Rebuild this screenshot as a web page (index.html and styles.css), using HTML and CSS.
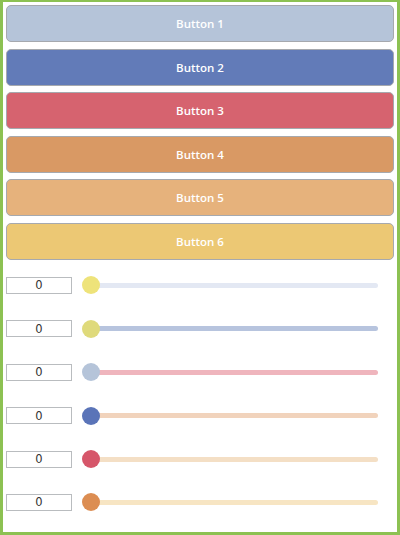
FILE: index.html
```html
<!DOCTYPE html>
<html>
<head>
<meta charset="utf-8">
<link rel="stylesheet" href="styles.css">
</head>
<body>
<div class="frame">
  <div class="buttons">
    <div class="btn b1">Button 1</div>
    <div class="btn b2">Button 2</div>
    <div class="btn b3">Button 3</div>
    <div class="btn b4">Button 4</div>
    <div class="btn b5">Button 5</div>
    <div class="btn b6">Button 6</div>
  </div>
  <div class="rows">
    <div class="row s1"><div class="num">0</div><div class="slider"><div class="thumb"></div><div class="track"></div></div></div>
    <div class="row s2"><div class="num">0</div><div class="slider"><div class="thumb"></div><div class="track"></div></div></div>
    <div class="row s3"><div class="num">0</div><div class="slider"><div class="thumb"></div><div class="track"></div></div></div>
    <div class="row s4"><div class="num">0</div><div class="slider"><div class="thumb"></div><div class="track"></div></div></div>
    <div class="row s5"><div class="num">0</div><div class="slider"><div class="thumb"></div><div class="track"></div></div></div>
    <div class="row s6"><div class="num">0</div><div class="slider"><div class="thumb"></div><div class="track"></div></div></div>
  </div>
</div>
</body>
</html>
```
FILE: styles.css
```css
html, body {
  margin: 0;
  padding: 0;
  background: #ffffff;
}
.frame {
  box-sizing: border-box;
  width: 400px;
  height: 535px;
  border: 3px solid #8cc152;
  border-top-width: 2px;
  padding: 3px 3px 0 3px;
  font-family: "Open Sans", "DejaVu Sans", sans-serif;
}
.buttons {
  display: flex;
  flex-direction: column;
  gap: 6.6px;
}
.btn {
  box-sizing: border-box;
  height: 37px;
  border: 1px solid #a6a9ae;
  border-radius: 5px;
  color: #ffffff;
  font-size: 11.5px;
  font-weight: 600;
  display: flex;
  align-items: center;
  justify-content: center;
}
.b1 { background: #b5c4d9; }
.b2 { background: #627bb8; }
.b3 { background: #d6636f; }
.b4 { background: #d99964; }
.b5 { background: #e6b27c; }
.b6 { background: #ecc874; }
.rows {
  display: flex;
  flex-direction: column;
  gap: 26.4px;
  margin-top: 17px;
}
.row {
  display: flex;
  align-items: center;
  height: 17px;
}
.num {
  box-sizing: border-box;
  width: 66px;
  height: 17px;
  border: 1px solid #b9bcbf;
  font-family: "DejaVu Sans", sans-serif;
  font-size: 11.5px;
  color: #333333;
  display: flex;
  align-items: center;
  justify-content: center;
}
.slider {
  display: flex;
  align-items: center;
  width: 296px;
  margin-left: 10px;
}
.thumb {
  width: 18px;
  height: 18px;
  border-radius: 50%;
  position: relative;
  z-index: 1;
  flex: none;
}
.track {
  flex: 1;
  height: 5px;
  border-radius: 3px;
  margin-left: -9px;
}
.s1 .thumb { background: #eee37a; }
.s1 .track { background: #e3e8f3; }
.s2 .thumb { background: #dfda7b; }
.s2 .track { background: #b7c4de; }
.s3 .thumb { background: #b5c4d9; }
.s3 .track { background: #efb5bd; }
.s4 .thumb { background: #5a74b8; }
.s4 .track { background: #f1d3bc; }
.s5 .thumb { background: #d6566a; }
.s5 .track { background: #f4dfc5; }
.s6 .thumb { background: #dc8d52; }
.s6 .track { background: #f7e5c3; }
```
